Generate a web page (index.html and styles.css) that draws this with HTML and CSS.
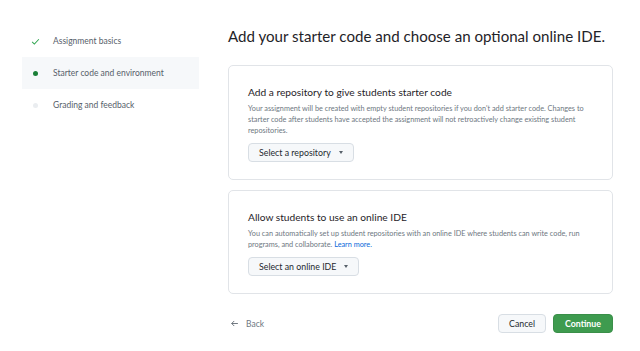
FILE: index.html
```html
<!DOCTYPE html>
<html lang="en">
<head>
  <meta charset="UTF-8">
  <meta name="viewport" content="width=device-width, initial-scale=1.0">
  <title>New assignment</title>
  <link rel="stylesheet" href="styles.css">
</head>
<body>
  <div class="page">
    <nav class="steps">
      <div class="step done">
        <span class="step-icon">
          <svg width="9" height="9" viewBox="0 0 16 16"><path d="M2 8.5l4 4L14 4" fill="none" stroke="#2da44e" stroke-width="1.8"/></svg>
        </span>
        <span>Assignment basics</span>
      </div>
      <div class="step current">
        <span class="step-icon"><span class="dot"></span></span>
        <span>Starter code and environment</span>
      </div>
      <div class="step">
        <span class="step-icon"><span class="dot"></span></span>
        <span>Grading and feedback</span>
      </div>
    </nav>

    <main class="content">
      <h1>Add your starter code and choose an optional online IDE.</h1>

      <section class="card card-repo">
        <h2>Add a repository to give students starter code</h2>
        <p>Your assignment will be created with empty student repositories if you don't add starter code. Changes to starter code after students have accepted the assignment will not retroactively change existing student repositories.</p>
        <button class="select">Select a repository <span class="caret"></span></button>
      </section>

      <section class="card card-ide">
        <h2>Allow students to use an online IDE</h2>
        <p>You can automatically set up student repositories with an online IDE where students can write code, run programs, and collaborate. <a href="#">Learn more.</a></p>
        <button class="select">Select an online IDE <span class="caret"></span></button>
      </section>

      <div class="footer">
        <a class="back" href="#">
          <svg width="9" height="9" viewBox="0 0 16 16"><path d="M14 8H3M7.5 3.5L3 8l4.5 4.5" fill="none" stroke="#57606a" stroke-width="1.5"/></svg>
          Back
        </a>
        <div class="actions">
          <button class="btn">Cancel</button>
          <button class="btn btn-primary">Continue</button>
        </div>
      </div>
    </main>
  </div>
</body>
</html>
```

FILE: styles.css
```css
body {
  margin: 0;
  font-family: Lato, "Noto Sans", sans-serif;
  background: #fff;
  color: #24292f;
}
.page {
  display: flex;
  padding-top: 25px;
}
.steps {
  width: 177px;
  margin-left: 22px;
  margin-right: 29px;
  display: flex;
  flex-direction: column;
}
.step {
  display: flex;
  align-items: center;
  height: 32px;
  font-size: 8.5px;
  color: #57606a;
}
.step.current {
  background: #f6f8fa;
}
.step-icon {
  width: 26px;
  margin-right: 5px;
  display: flex;
  justify-content: center;
}
.dot {
  width: 5px;
  height: 5px;
  border-radius: 50%;
  background: #eaedf0;
}
.current .dot {
  background: #1a7f37;
}
.content {
  width: 385px;
}
h1 {
  font-size: 15.1px;
  font-weight: 400;
  margin: 0 0 18px;
  line-height: 22px;
  color: #1f2328;
}
.card {
  border: 1px solid #e1e4e8;
  border-radius: 5px;
  padding: 19px 19px 17px;
  margin-bottom: 10px;
}
.card h2 {
  font-size: 10.2px;
  font-weight: 400;
  margin: 0 0 4px;
  line-height: 14px;
  color: #1f2328;
}
.card p {
  font-size: 7.3px;
  line-height: 11px;
  color: #6e7781;
  margin: 0 0 7px;
}
.card a {
  color: #0969da;
  text-decoration: none;
}
.select {
  font-family: inherit;
  font-size: 8.8px;
  color: #24292f;
  background: #f6f8fa;
  border: 1px solid #d8dee4;
  border-radius: 4px;
  height: 19px;
  padding: 0 10px;
  display: flex;
  width: max-content;
  align-items: center;
  gap: 8px;
}
.caret {
  width: 0;
  height: 0;
  border-left: 2.5px solid transparent;
  border-right: 2.5px solid transparent;
  border-top: 3px solid #57606a;
}
.footer {
  display: flex;
  justify-content: space-between;
  align-items: center;
  margin-top: 20px;
}
.back {
  display: flex;
  align-items: center;
  gap: 7px;
  font-size: 8.5px;
  color: #6e7781;
  text-decoration: none;
  padding-left: 2px;
}
.actions {
  display: flex;
  gap: 7px;
}
.btn {
  font-family: inherit;
  font-size: 8.8px;
  height: 19px;
  padding: 0 10px;
  border: 1px solid #d8dee4;
  border-radius: 4px;
  background: #f6f8fa;
  color: #24292f;
}
.btn-primary {
  background: #3e9b4f;
  border-color: #3a8f49;
  color: #fff;
  font-weight: 700;
  padding: 0 11px;
}
```
